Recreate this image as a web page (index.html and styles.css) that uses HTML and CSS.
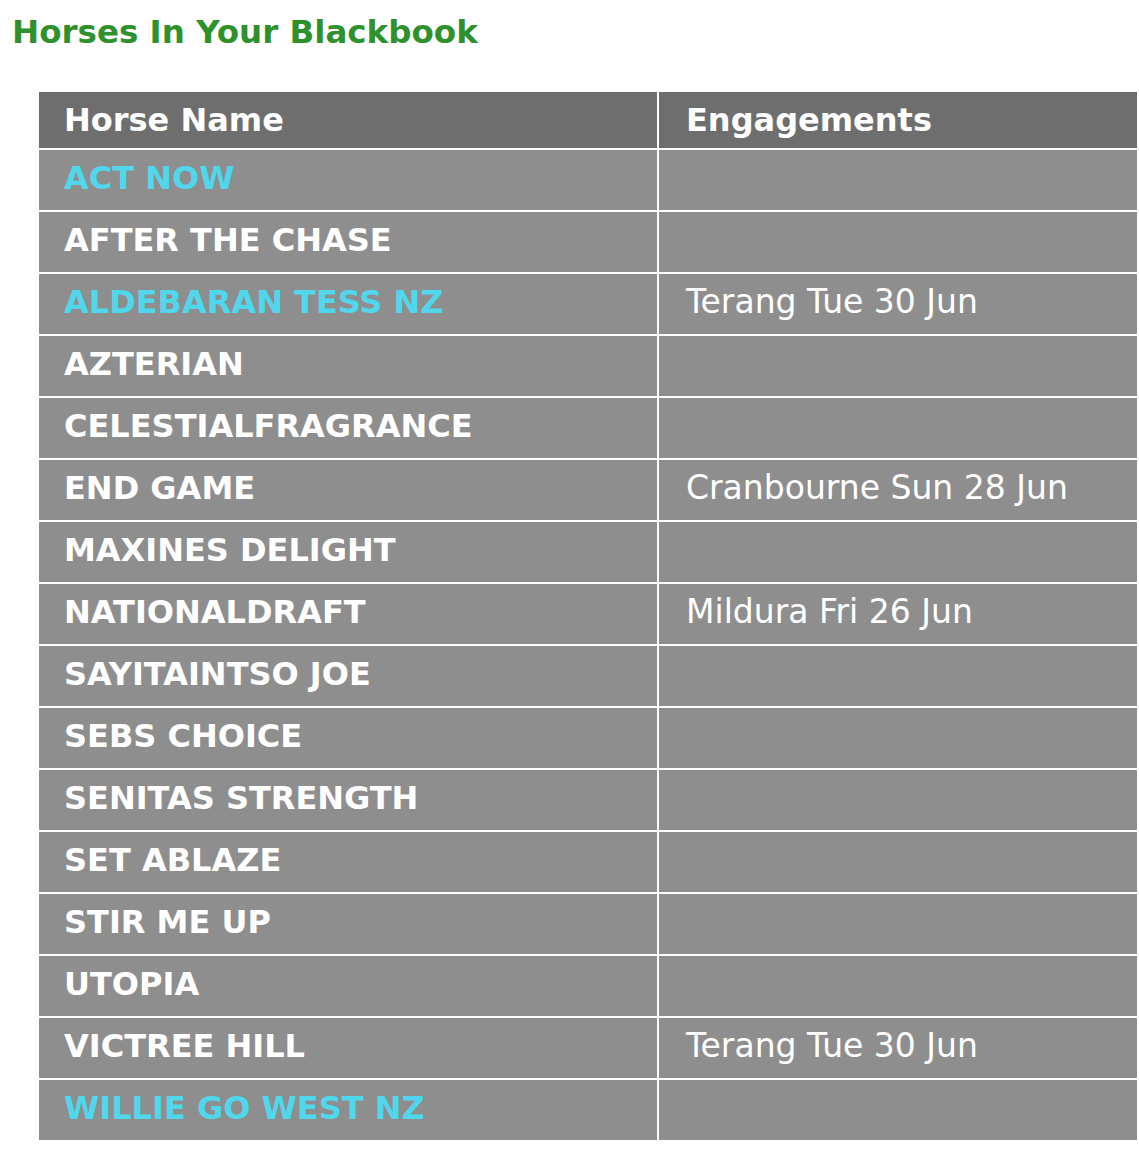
FILE: index.html
```html
<!DOCTYPE html>
<html lang="en">
<head>
<meta charset="utf-8">
<title>Horses In Your Blackbook</title>
<link rel="stylesheet" href="styles.css">
</head>
<body>
<h1 class="title">Horses In Your Blackbook</h1>
<table class="book">
  <colgroup><col class="c1"><col class="c2"></colgroup>
  <thead>
    <tr><th>Horse Name</th><th>Engagements</th></tr>
  </thead>
  <tbody>
    <tr><td class="name hl">ACT NOW</td><td class="eng"></td></tr>
    <tr><td class="name">AFTER THE CHASE</td><td class="eng"></td></tr>
    <tr><td class="name hl">ALDEBARAN TESS NZ</td><td class="eng">Terang Tue 30 Jun</td></tr>
    <tr><td class="name">AZTERIAN</td><td class="eng"></td></tr>
    <tr><td class="name">CELESTIALFRAGRANCE</td><td class="eng"></td></tr>
    <tr><td class="name">END GAME</td><td class="eng">Cranbourne Sun 28 Jun</td></tr>
    <tr><td class="name">MAXINES DELIGHT</td><td class="eng"></td></tr>
    <tr><td class="name">NATIONALDRAFT</td><td class="eng">Mildura Fri 26 Jun</td></tr>
    <tr><td class="name">SAYITAINTSO JOE</td><td class="eng"></td></tr>
    <tr><td class="name">SEBS CHOICE</td><td class="eng"></td></tr>
    <tr><td class="name">SENITAS STRENGTH</td><td class="eng"></td></tr>
    <tr><td class="name">SET ABLAZE</td><td class="eng"></td></tr>
    <tr><td class="name">STIR ME UP</td><td class="eng"></td></tr>
    <tr><td class="name">UTOPIA</td><td class="eng"></td></tr>
    <tr><td class="name">VICTREE HILL</td><td class="eng">Terang Tue 30 Jun</td></tr>
    <tr><td class="name hl">WILLIE GO WEST NZ</td><td class="eng"></td></tr>
  </tbody>
</table>
</body>
</html>
```
FILE: styles.css
```css
body {
  margin: 8px 0 8px 8px;
  background: #ffffff;
  font-family: "DejaVu Sans", Verdana, sans-serif;
}

.title {
  margin: 4px 0 38px 4px;
  font-size: 32.5px;
  line-height: 40px;
  font-weight: bold;
  color: #2f912b;
}

.book {
  margin-left: 29px;
  width: 1102px;
  table-layout: fixed;
  border-collapse: separate;
  border-spacing: 2px;
}

.c1 { width: 618px; }
.c2 { width: 478px; }

.book th {
  height: 56px;
  padding: 0 0 0 25px;
  background: #6e6e6e;
  color: #ffffff;
  font-size: 32px;
  font-weight: bold;
  text-align: left;
  vertical-align: middle;
  box-sizing: border-box;
}

.book th + th { padding-left: 27px; }

.book td {
  height: 60px;
  padding: 0 0 5px 25px;
  background: #8e8e8e;
  color: #ffffff;
  font-size: 32px;
  vertical-align: middle;
  white-space: nowrap;
  box-sizing: border-box;
}

.book td.name { font-weight: bold; }
.book td.eng { padding-left: 27px; font-size: 33px; }
.book td.hl { color: #50d7ec; }
```
